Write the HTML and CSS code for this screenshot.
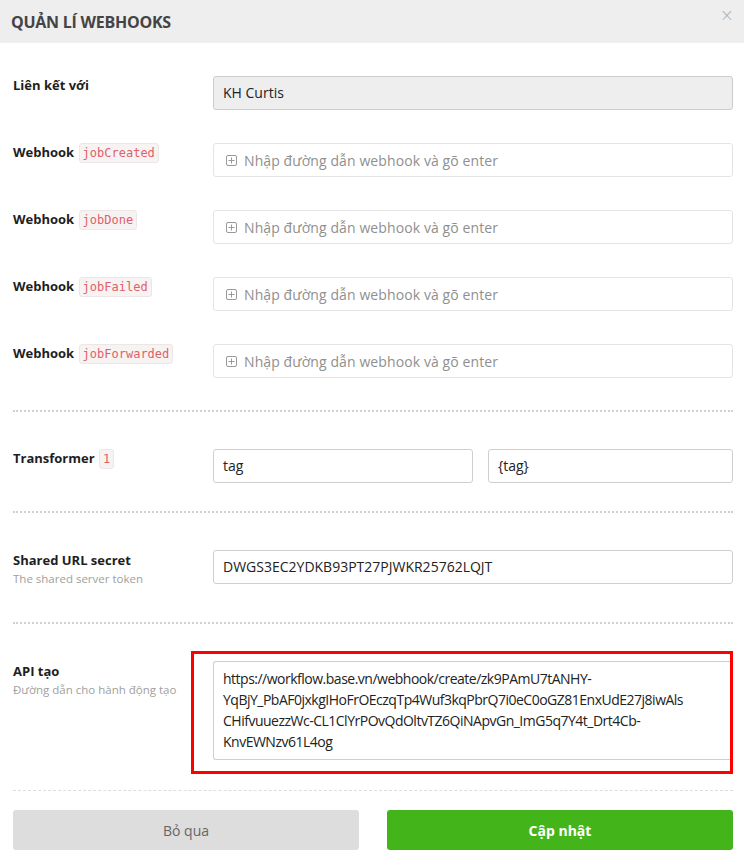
FILE: index.html
```html
<!DOCTYPE html>
<html lang="vi">
<head>
<meta charset="utf-8">
<title>Quản lí webhooks</title>
<link rel="stylesheet" href="styles.css">
</head>
<body>
<div class="modal">
  <header class="modal-header">
    <h1 class="modal-title">QUẢN LÍ WEBHOOKS</h1>
    <span class="modal-close">×</span>
  </header>
  <div class="modal-body">
    <div class="row">
      <div class="label"><span class="label-text">Liên kết với</span></div>
      <div class="input input-disabled">KH Curtis</div>
    </div>
    <div class="row">
      <div class="label"><span class="label-text">Webhook</span> <code class="tag">jobCreated</code></div>
      <div class="input input-tags"><svg class="plus" viewBox="0 0 11 11" width="11" height="11"><rect x="0.5" y="0.5" width="10" height="10" rx="1.5" fill="none" stroke="#999"/><path d="M5.5 2.5v6M2.5 5.5h6" stroke="#999"/></svg><span class="placeholder">Nhập đường dẫn webhook và gõ enter</span></div>
    </div>
    <div class="row">
      <div class="label"><span class="label-text">Webhook</span> <code class="tag">jobDone</code></div>
      <div class="input input-tags"><svg class="plus" viewBox="0 0 11 11" width="11" height="11"><rect x="0.5" y="0.5" width="10" height="10" rx="1.5" fill="none" stroke="#999"/><path d="M5.5 2.5v6M2.5 5.5h6" stroke="#999"/></svg><span class="placeholder">Nhập đường dẫn webhook và gõ enter</span></div>
    </div>
    <div class="row">
      <div class="label"><span class="label-text">Webhook</span> <code class="tag">jobFailed</code></div>
      <div class="input input-tags"><svg class="plus" viewBox="0 0 11 11" width="11" height="11"><rect x="0.5" y="0.5" width="10" height="10" rx="1.5" fill="none" stroke="#999"/><path d="M5.5 2.5v6M2.5 5.5h6" stroke="#999"/></svg><span class="placeholder">Nhập đường dẫn webhook và gõ enter</span></div>
    </div>
    <div class="row row-last-hook">
      <div class="label"><span class="label-text">Webhook</span> <code class="tag">jobForwarded</code></div>
      <div class="input input-tags"><svg class="plus" viewBox="0 0 11 11" width="11" height="11"><rect x="0.5" y="0.5" width="10" height="10" rx="1.5" fill="none" stroke="#999"/><path d="M5.5 2.5v6M2.5 5.5h6" stroke="#999"/></svg><span class="placeholder">Nhập đường dẫn webhook và gõ enter</span></div>
    </div>

    <div class="divider"></div>

    <div class="row row-transformer">
      <div class="label"><span class="label-text">Transformer</span> <code class="tag">1</code></div>
      <div class="pair">
        <div class="input">tag</div>
        <div class="input">{tag}</div>
      </div>
    </div>

    <div class="divider"></div>

    <div class="row row-shared">
      <div class="label label-stack">
        <span class="label-text">Shared URL secret</span>
        <span class="help">The shared server token</span>
      </div>
      <div class="input">DWGS3EC2YDKB93PT27PJWKR25762LQJT</div>
    </div>

    <div class="divider"></div>

    <div class="row row-api">
      <div class="label label-stack">
        <span class="label-text">API tạo</span>
        <span class="help">Đường dẫn cho hành động tạo</span>
      </div>
      <div class="textarea">https://workflow.base.vn/webhook/create/zk9PAmU7tANHY-<br>YqBjY_PbAF0jxkgIHoFrOEczqTp4Wuf3kqPbrQ7i0eC0oGZ81EnxUdE27j8iwAls<br>CHifvuuezzWc-CL1ClYrPOvQdOltvTZ6QiNApvGn_ImG5q7Y4t_Drt4Cb-<br>KnvEWNzv61L4og</div>
      <div class="highlight"></div>
    </div>

    <div class="divider divider-light"></div>

    <div class="actions">
      <button class="btn btn-cancel" type="button">Bỏ qua</button>
      <button class="btn btn-primary" type="button">Cập nhật</button>
    </div>
  </div>
</div>
</body>
</html>
```
FILE: styles.css
```css
* { box-sizing: border-box; }
html, body { margin: 0; padding: 0; background: #fff; }
body {
  font-family: "Open Sans", "Noto Sans", "Liberation Sans", sans-serif;
  font-size: 13px;
  color: #222;
}
.modal { width: 744px; height: 852px; overflow: hidden; }
.modal-header {
  height: 43px;
  background: #eeeeee;
  display: flex;
  align-items: center;
  justify-content: space-between;
  padding: 0 10px 0 11px;
}
.modal-title {
  margin: 0;
  font-size: 16px;
  font-weight: 700;
  color: #444;
  letter-spacing: -0.25px;
  line-height: 20px;
  padding-top: 1px;
}
.modal-close {
  color: #b0b0b0;
  font-size: 17px;
  line-height: 17px;
  margin-top: -12px;
  font-family: "DejaVu Sans", sans-serif;
  font-weight: 300;
}
.modal-body { padding: 33px 11px 0 13px; }

.row {
  display: grid;
  grid-template-columns: 200px 1fr;
  align-items: start;
  margin-bottom: 33px;
}
.row-last-hook { margin-bottom: 32px; }
.row-transformer { margin-bottom: 28px; }
.row-shared { margin-bottom: 35px; }
.row-api { margin-bottom: 30px; position: relative; }

.label { line-height: 18px; padding-top: 0; }
.label-text { font-weight: 700; color: #1e1e1e; font-size: 13px; }
.label-stack { display: flex; flex-direction: column; padding-top: 1px; }
.help { color: #a0a0a0; font-size: 11.5px; line-height: 16px; margin-top: 2px; }

.tag {
  display: inline-block;
  font-family: "DejaVu Sans Mono", "Liberation Mono", monospace;
  font-size: 12px;
  line-height: 18px;
  color: #e0606a;
  background: #f7f3f3;
  border: 1px solid #ece6e6;
  border-radius: 3px;
  padding: 0 3px;
  margin-left: 1px;
  vertical-align: top;
}

.input {
  height: 34px;
  border: 1px solid #cfcfcf;
  border-radius: 3px;
  padding: 0 9px 2px 9px;
  display: flex;
  align-items: center;
  font-size: 14px;
  color: #222;
  background: #fff;
  white-space: nowrap;
  overflow: hidden;
}
.input-disabled { background: #eeeeee; border-color: #cccccc; }
.input-tags { border-color: #e4e4e4; padding-left: 12px; padding-bottom: 0; }
.plus { flex: none; margin-right: 7px; }
.placeholder { color: #8f8f8f; font-size: 14px; letter-spacing: 0.1px; }

.pair {
  display: grid;
  grid-template-columns: 260px 1fr;
  gap: 15px;
}

.textarea {
  height: 99px;
  border: 1px solid #cfcfcf;
  border-right: none;
  border-radius: 3px 0 0 3px;
  padding: 6px 9px 0 9px;
  font-size: 14px;
  line-height: 21px;
  color: #222;
  white-space: nowrap;
  overflow: hidden;
  letter-spacing: -0.5px;
}
.highlight {
  position: absolute;
  left: 178px;
  top: -10px;
  width: 542px;
  height: 123px;
  border: 3px solid #ff0000;
  pointer-events: none;
}

.divider {
  border-top: 2px dotted #d0d0d0;
  margin: 0 0 37px 0;
}
.divider-light {
  border-top: 1px dashed #dddddd;
  margin-bottom: 19px;
}

.actions {
  display: grid;
  grid-template-columns: 1fr 1fr;
  gap: 28px;
}
.btn {
  height: 40px;
  border: none;
  border-radius: 3px;
  font-family: "Open Sans", "Noto Sans", sans-serif;
  font-size: 14px;
  cursor: pointer;
}
.btn-cancel { background: #dddddd; color: #666; }
.btn-primary { background: #43b51a; color: #fff; font-weight: 700; }
```
